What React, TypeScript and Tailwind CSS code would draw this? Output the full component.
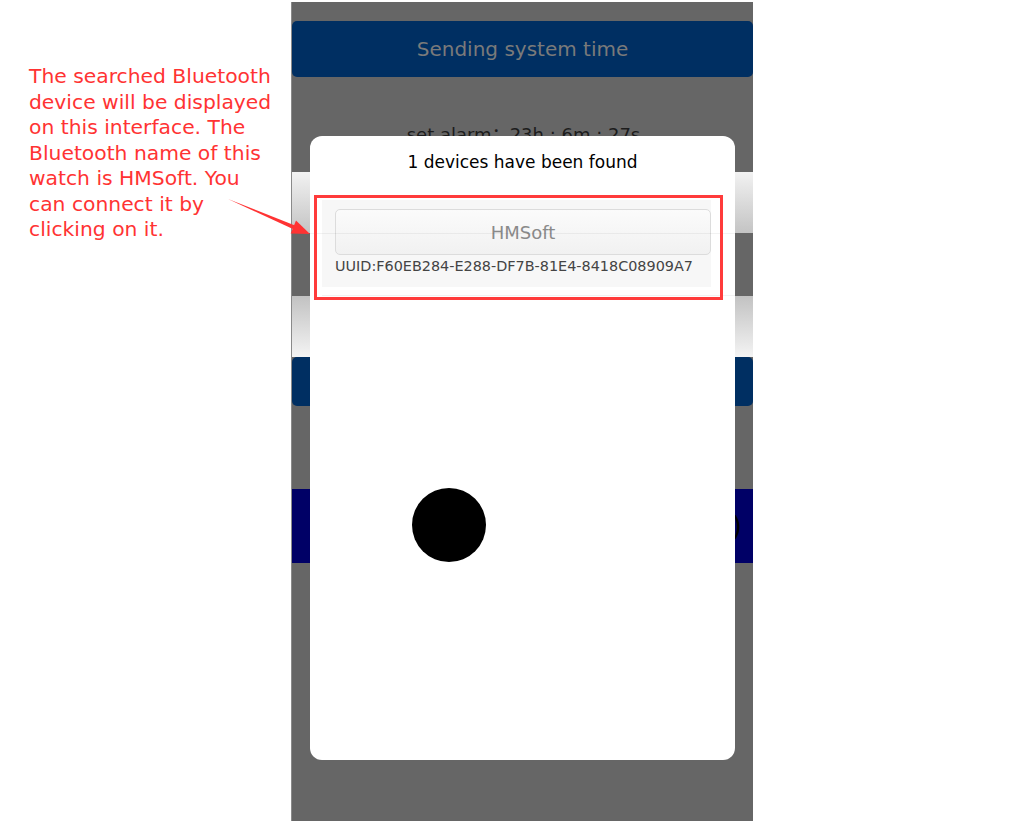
import React from "react";

const FONT = { fontFamily: '"DejaVu Sans", "Noto Sans CJK SC", sans-serif' };

export default function App() {
  return (
    <div className="relative w-[1011px] h-[821px] bg-white flex overflow-hidden" style={FONT}>
      {/* annotation text */}
      <div className="w-[291px] shrink-0 pl-[29px] pt-[64px] text-[20.3px] leading-[25.5px] text-[#ff3333]">
        <div>The searched Bluetooth</div>
        <div>device will be displayed</div>
        <div>on this interface. The</div>
        <div>Bluetooth name of this</div>
        <div>watch is HMSoft. You</div>
        <div>can connect it by</div>
        <div>clicking on it.</div>
      </div>

      {/* phone screen */}
      <div className="relative mt-[2px] w-[462px] h-[819px] bg-[#666666] border-l border-[#8a8a8a] flex flex-col">
        <div className="pt-[19px]">
          <div className="h-[56px] rounded-[5px] bg-[#002f62] flex items-center justify-center text-[20px] text-[#7a7a7a]">
            Sending system time
          </div>
        </div>
        <div className="h-[95px] pt-[46px] text-center text-[18px] leading-[24px] text-[#1c1c1c] pl-[2px]">
          set alarm：23h : 6m : 27s
        </div>
        <div className="h-[61px] bg-gradient-to-b from-[#f2f2f2] to-[#c4c4c4]" />
        <div className="h-[63px]" />
        <div className="h-[61px] bg-gradient-to-b from-[#c2c2c2] to-[#f4f4f4]" />
        <div className="h-[49px] rounded-[5px] bg-[#002f62]" />
        <div className="h-[83px]" />
        <div className="h-[74px] bg-[#000066] flex items-center justify-end pr-[11px] text-[26px] text-black">
          )
        </div>

        {/* modal */}
        <div className="absolute left-[18px] top-[134px] w-[425px] h-[624px] bg-white rounded-[12px] flex flex-col">
          <div className="pt-[14px] h-[64px] text-center text-[17px] leading-[24px] text-black">
            1 devices have been found
          </div>
          <div className="ml-[12px] w-[389px] h-[87px] bg-[#f7f7f7] pl-[13px] pt-[9px]">
            <div className="h-[46px] rounded-[5px] border border-[#dcdcdc] bg-gradient-to-b from-[#fbfbfb] to-[#f1f1f1] flex items-center justify-center text-[18px] text-[#8a8a8a]">
              HMSoft
            </div>
            <div className="mt-[2px] text-[14.4px] leading-[18px] text-[#444444] whitespace-nowrap">
              UUID:F60EB284-E288-DF7B-81E4-8418C08909A7
            </div>
          </div>
          <div className="flex-1 flex items-start pl-[102px] pt-[201px]">
            <div className="w-[74px] h-[74px] rounded-full bg-black" />
          </div>
          {/* faint ghost lines */}
          <div className="absolute left-0 top-[97px] w-[425px] h-px bg-black/5" />
          <div className="absolute left-[12px] top-[159px] w-[413px] h-px bg-black/5" />
        </div>
      </div>

      {/* red highlight rectangle */}
      <div className="absolute left-[314px] top-[195px] w-[409px] h-[105px] border-[3px] border-[#ff3b3b]" />

      {/* arrow */}
      <svg className="absolute left-0 top-0 pointer-events-none" width="1011" height="821">
        <polygon points="228,199 295,225.5 294,229.5" fill="#ff3333" />
        <polygon points="310,234 296,220.6 290.7,233.4" fill="#ff3333" />
      </svg>
    </div>
  );
}
